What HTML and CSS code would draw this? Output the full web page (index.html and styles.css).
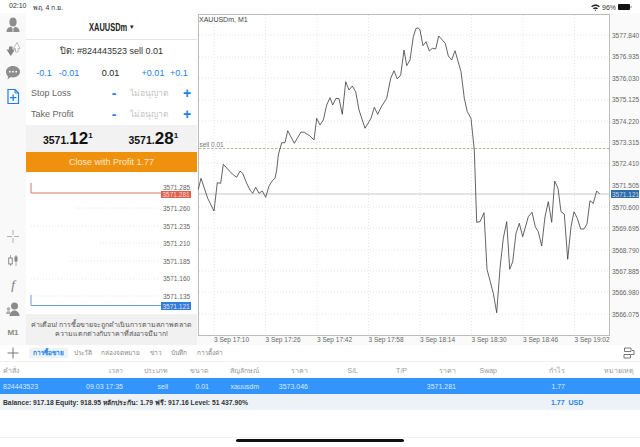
FILE: index.html
```html
<!DOCTYPE html>
<html lang="th">
<head>
<meta charset="utf-8">
<title>XAUUSDm</title>
<link rel="stylesheet" href="styles.css">
</head>
<body>
<div class="app">
  <header class="status">
    <div class="status-left"><span>02:10</span><span>พฤ. 4 ก.ย.</span></div>
    <div class="status-right">
      <svg class="wifi" width="9" height="7" viewBox="0 0 10 8"><path d="M0 2.6C2.8 0 7.2 0 10 2.6L8.9 3.8C6.6 1.8 3.4 1.8 1.100 3.800ZM2.100 4.800C3.800 3.300 6.200 3.300 7.900 4.800L6.800 6C5.700 5.100 4.300 5.100 3.200 6ZM5 8L4 6.900C4.600 6.400 5.400 6.400 6 6.900Z" fill="#222"/></svg>
      <span>96%</span>
      <svg class="battery" width="14" height="6" viewBox="0 0 14 6"><rect width="12" height="6" rx="1" fill="#111"/><rect x="12.500" y="2" width="1" height="2" fill="#888"/></svg>
    </div>
  </header>

  <main class="main">
    <nav class="rail">
      <div class="rail-group">
        <svg class="rail-icon" width="16" height="17" viewBox="0 0 16 17"><ellipse cx="8" cy="6" rx="3.600" ry="4.500" fill="#8e8e8e"/><path d="M1.500 16c0-3.500 2.500-5 4.500-5.200L8 13l2-2.200c2 .2 4.500 1.700 4.500 5.200z" fill="#8e8e8e"/><path d="M8 13v3" stroke="#fff" stroke-width=".7"/></svg>
        <svg class="rail-icon" width="16" height="17" viewBox="0 0 16 17"><path d="M1.500 9.500h2.500V6.500h3.500v3H10L5.700 16z" fill="#858585"/><path d="M8.500 8.500h2v3.500h2.500V8.500h2L12 2.500z" fill="#fff" stroke="#aaa" stroke-width=".8"/></svg>
        <svg class="rail-icon" width="16" height="17" viewBox="0 0 16 17"><path d="M8 2c3.900 0 7 2.500 7 5.700s-3.100 5.700-7 5.700c-.8 0-1.600-.1-2.300-.3L2.500 15.500l.7-3C1.800 11.400 1 9.700 1 7.700 1 4.500 4.100 2 8 2z" fill="#8e8e8e"/><circle cx="4.800" cy="7.700" r=".9" fill="#fff"/><circle cx="8" cy="7.700" r=".9" fill="#fff"/><circle cx="11.200" cy="7.700" r=".9" fill="#fff"/></svg>
        <svg class="rail-icon" width="16" height="17" viewBox="0 0 16 17"><path d="M3 1.500h7l3.500 3.500v10.500H3z" fill="#fff" stroke="#1a7ee6" stroke-width="1.200"/><path d="M10 1.500V5h3.500" fill="none" stroke="#1a7ee6" stroke-width="1"/><path d="M8.200 6.500v6.500M5 9.700h6.500" stroke="#1a7ee6" stroke-width="1.300"/></svg>
      </div>
      <div class="rail-group rail-tools">
        <svg class="rail-icon" width="16" height="15" viewBox="0 0 16 15"><path d="M8 1v5M8 9v5M2 7.500h5M9 7.500h5" stroke="#b0b0b0" stroke-width="1"/></svg>
        <svg class="rail-icon" width="16" height="15" viewBox="0 0 16 15"><path d="M5.500 2v11M11 2v11" stroke="#999" stroke-width=".8"/><rect x="3.800" y="5" width="3.400" height="6" fill="#fff" stroke="#777" stroke-width=".9"/><rect x="9.500" y="3.500" width="3" height="5" fill="#888"/></svg>
        <span class="rail-f">f</span>
        <svg class="rail-icon" width="16" height="15" viewBox="0 0 16 15"><circle cx="9.500" cy="5" r="3.500" fill="#8a8a8a"/><path d="M4.500 15c0-3 2.200-5.500 5-5.500s5 2.500 5 5.500z" fill="#8a8a8a"/><circle cx="3.500" cy="8" r="1.800" fill="#aaa"/><path d="M1 13c0-1.600 1-3 2.500-3s2 1.400 2 3z" fill="#aaa"/></svg>
        <span class="rail-m1">M1</span>
      </div>
    </nav>

    <section class="panel">
      <h1 class="symbol"><span class="symbol-name">XAUUSDm</span><span class="caret">▾</span></h1>
      <p class="close-title">ปิด: #824443523 sell 0.01</p>
      <div class="volume">
        <span class="link">-0.1</span><span class="link">-0.01</span>
        <span class="vol-value">0.01</span>
        <span class="link">+0.01</span><span class="link">+0.1</span>
      </div>
      <div class="level"><span>Stop Loss</span><b class="step">-</b><span class="na">ไม่อนุญาต</span><b class="step">+</b></div>
      <div class="level"><span>Take Profit</span><b class="step">-</b><span class="na">ไม่อนุญาต</span><b class="step">+</b></div>
      <div class="quotes">
        <div class="quote">3571.<span class="big">12</span><sup>1</sup></div>
        <div class="quote">3571.<span class="big">28</span><sup>1</sup></div>
      </div>
      <button class="close-btn">Close with Profit 1.77</button>
      <svg class="mini" width="171" height="142" viewBox="26 172 171 142">
        <path class="mini-grid" d="M76 208H158M31 226H158M100 243H158M70 261H158M31 279H158M31 296H158"/>
        <g class="mini-labels">
          <text x="163" y="190">3571.285</text>
          <text x="163" y="211">3571.260</text>
          <text x="163" y="229">3571.235</text>
          <text x="163" y="246">3571.210</text>
          <text x="163" y="264">3571.185</text>
          <text x="163" y="281">3571.160</text>
          <text x="163" y="299">3571.135</text>
        </g>
        <path d="M31 183V193H161" fill="none" stroke="#d9776b" stroke-width="1"/>
        <path d="M31 295V305.500H161" fill="none" stroke="#6f9fd8" stroke-width="1"/>
        <rect x="161" y="191" width="30" height="7" fill="#de5f50"/>
        <text class="tag-text" x="162.500" y="197">3571.281</text>
        <rect x="161" y="302" width="30" height="8" fill="#2d7fe0"/>
        <text class="tag-text" x="162.500" y="308.500">3571.121</text>
      </svg>
      <p class="warn">ค่าเตือน! การซื้อขายจะถูกดำเนินการตามสภาพตลาด<br>ความแตกต่างกับราคาที่ส่งอาจมีมาก!</p>
    </section>

    <section class="chart">
      <svg width="443" height="332" viewBox="197 13 443 332">
        <rect x="198.500" y="14.500" width="411" height="321" fill="#fff" stroke="#bdbdbd" stroke-width="1"/>
        <path class="chart-grid" d="M199 35H609M199 57H609M199 78H609M199 100H609M199 121H609M199 142H609M199 163H609M199 207H609M199 228H609M199 250H609M199 271H609M199 292H609M199 314H609M214 15V335M265.500 15V335M317 15V335M368.500 15V335M420 15V335M471.500 15V335M523 15V335M574.500 15V335"/>
        <path d="M199 194H609" stroke="#c8c8c8" stroke-width="1"/>
        <path d="M199 148.500H609" stroke="#b4b4a4" stroke-width="1" stroke-dasharray="2.500 1.500"/>
        <polyline class="price" points="198.300,189.300 201,178.300 207.700,198.300 214,211 217.300,182.700 220.700,183.300 223.300,164.300 232.300,174 236.700,177.300 240,171 242.700,173.300 246.700,183.300 250,190 252.700,193.300 255.700,187.300 259,193.300 262.300,191 265.700,197.300 269,186 272.300,180.700 275,178.300 276.700,170 278.300,155 281.700,142.700 285,142.700 287.700,130.700 294.300,143.300 301,132 304.300,132.300 310,136 314,140 316.700,118.300 320,125 323.300,120 326.700,105 330,97.700 332.700,105 336,98.300 339,98.700 342.300,114.300 345.700,81.700 349,90 352.300,86 355.700,91.700 359,110 365,128.300 371,118.300 374.300,107.300 377.700,114.300 381,107.300 386.700,98.300 390.700,78.300 394,70.700 397.300,79 400.700,75 404,50 406.700,65.700 410,60 413.300,36.700 416,28.300 418.300,28 420,30 423,45.700 426,41.700 429.300,51 432.300,48.300 435.700,49 438.700,36 445.300,43.300 448.300,56 451.700,60 455,50.700 461,71.700 464.300,98.300 467.300,111.700 471,118.300 474.300,150 476.700,222.300 480,221.700 484,212.700 487,269.300 490.300,281.700 493.300,293.300 496.700,312.700 500,268.300 503.300,238.300 506.700,221.700 509.700,269.300 512.700,261.700 516,233.300 519.300,223.300 522.700,236.700 528.300,216.700 532,212.300 535.300,226.700 538.300,231.700 541.700,246 545,216.700 548.300,201.700 551.700,222.300 554.700,181 558,188.300 561,211.700 564.300,214 567.700,259.300 571,226.700 574,211.700 577.300,218.300 580.700,229 584,229 587,224 590,200.700 593.300,203.300 596.700,191 599.700,194"/>
        <text class="chart-title" x="199" y="21.500">XAUUSDm, M1</text>
        <text class="chart-note" x="199.500" y="147">sell 0.01</text>
        <g class="axis">
          <text x="612" y="38">3577.840</text>
          <text x="612" y="59">3576.935</text>
          <text x="612" y="81">3576.030</text>
          <text x="612" y="102">3575.125</text>
          <text x="612" y="124">3574.220</text>
          <text x="612" y="145">3573.315</text>
          <text x="612" y="166">3572.410</text>
          <text x="612" y="188">3571.505</text>
          <text x="612" y="210">3570.600</text>
          <text x="612" y="231">3569.695</text>
          <text x="612" y="253">3568.790</text>
          <text x="612" y="274">3567.885</text>
          <text x="612" y="295">3566.980</text>
          <text x="612" y="317">3566.075</text>
          <text x="214" y="341.500">3 Sep 17:10</text>
          <text x="265.500" y="341.500">3 Sep 17:26</text>
          <text x="317" y="341.500">3 Sep 17:42</text>
          <text x="368.500" y="341.500">3 Sep 17:58</text>
          <text x="420" y="341.500">3 Sep 18:14</text>
          <text x="471.500" y="341.500">3 Sep 18:30</text>
          <text x="523" y="341.500">3 Sep 18:46</text>
          <text x="574.500" y="341.500">3 Sep 19:02</text>
        </g>
        <rect x="611" y="190" width="28" height="8" fill="#2f6ea8"/>
        <text class="axis-tag" x="612" y="196.500">3571.121</text>
      </svg>
    </section>
  </main>

  <section class="tabs">
    <svg class="tab-plus" width="14" height="14" viewBox="0 0 14 14"><path d="M7 1.500v11M1.500 7h11" stroke="#777" stroke-width="1"/></svg>
    <div class="tab-list">
      <span class="tab active">การซื้อขาย</span>
      <span class="tab">ประวัติ</span>
      <span class="tab">กล่องจดหมาย</span>
      <span class="tab">ข่าว</span>
      <span class="tab">บันทึก</span>
      <span class="tab">การตั้งค่า</span>
    </div>
    <svg class="tab-layout" width="12" height="12" viewBox="0 0 12 12"><path d="M1.500 1h6.500v3.500H1.500zM1 7.500h6.500V11H1zM8 7.500h3V3.500H9" fill="none" stroke="#777" stroke-width="1"/></svg>
  </section>

  <div class="table">
    <div class="row head">
      <span class="c-order">คำสั่ง</span><span>เวลา</span><span>ประเภท</span><span>ขนาด</span><span>สัญลักษณ์</span><span>ราคา</span><span>S/L</span><span>T/P</span><span>ราคา</span><span>Swap</span><span>กำไร</span><span class="c-note">หมายเหตุ</span>
    </div>
    <div class="row selected">
      <span class="c-order">824443523</span><span>09.03 17:35</span><span>sell</span><span>0.01</span><span>xauusdm</span><span>3573.046</span><span></span><span></span><span>3571.281</span><span></span><span>1.77</span><span></span>
    </div>
    <div class="balance">
      <span class="balance-text">Balance: 917.18 Equity: 918.95 หลักประกัน: 1.79 ฟรี: 917.16 Level: 51 437.90%</span>
      <span class="balance-profit">1.77&nbsp; USD</span>
    </div>
  </div>

  <footer class="home"><span class="home-bar"></span></footer>
</div>
</body>
</html>
```

FILE: styles.css
```css
* { box-sizing: border-box; }
html, body { margin: 0; padding: 0; }
body {
  width: 640px;
  height: 447px;
  overflow: hidden;
  background: #fff;
  font-family: "Liberation Sans", "Noto Sans", "Noto Sans CJK SC", sans-serif;
  color: #333;
}
.app { display: flex; flex-direction: column; width: 640px; height: 447px; }

.status {
  height: 13px;
  display: flex;
  justify-content: space-between;
  align-items: center;
  padding: 1px 8px 0 9px;
  font-size: 7px;
  color: #333;
}
.status-left { display: flex; gap: 6px; }
.status-right { display: flex; align-items: center; gap: 2px; }
.battery { display: block; margin-left: 0; }

.main { display: flex; height: 332px; background: #f5f5f5; }

.rail {
  width: 26px;
  display: flex;
  flex-direction: column;
  justify-content: space-between;
  align-items: center;
  padding: 3px 0 5px;
  background: #f9f9f9;
}
.rail-group { display: flex; flex-direction: column; align-items: center; gap: 7px; }
.rail-tools { gap: 9px; }
.rail-icon { display: block; }
.rail-f { font: italic 13px/15px "Liberation Serif", serif; color: #777; }
.rail-m1 { font-size: 8px; font-weight: 700; line-height: 15px; color: #888; }

.panel {
  width: 171px;
  display: flex;
  flex-direction: column;
  background: #fff;
}
.symbol {
  margin: 0;
  height: 27px;
  padding-top: 1px;
  display: flex;
  justify-content: center;
  align-items: center;
  gap: 3px;
  font-size: 7.500px;
  font-weight: 700;
  color: #222;
  border-bottom: 1px solid #e4e4e4;
}
.symbol-name {
  display: inline-block;
  font-size: 11px;
  line-height: 12px;
  width: 38px;
  white-space: nowrap;
  transform: scaleX(.68);
  transform-origin: left center;
}
.caret { font-size: 7px; font-weight: 400; }
.close-title {
  margin: 0;
  height: 23px;
  line-height: 23px;
  text-align: center;
  font-size: 9px;
  color: #333;
}
.volume {
  display: grid;
  grid-template-columns: 23px 27px 1fr 29px 23px;
  height: 19px;
  align-items: center;
  padding: 0 6.500px;
  font-size: 9px;
  text-align: center;
}
.link { color: #1f84e8; }
.vol-value { color: #222; }
.level {
  display: grid;
  grid-template-columns: 75px 16px 55px 20px;
  align-items: center;
  height: 21px;
  padding-left: 5px;
  font-size: 9px;
  color: #666;
}
.step { text-align: center; color: #1f84e8; font-size: 14px; font-weight: 700; line-height: 14px; }
.na { text-align: center; color: #c4c4c4; font-size: 8.500px; }
.quotes {
  height: 27px;
  display: grid;
  grid-template-columns: 1fr 1fr;
  align-items: center;
  background: #f2f2f2;
  text-align: center;
  margin-top: 1px;
}
.quote { font-size: 10.500px; font-weight: 700; color: #111; line-height: 27px; margin-left: -2px; }
.big { font-size: 17px; }
.quote sup { font-size: 8px; line-height: 0; vertical-align: 6px; }
.close-btn {
  display: block;
  width: 171px;
  height: 20px;
  padding: 0;
  border: 0;
  background: #ef910d;
  color: #fbe9d0;
  font: 9px "Liberation Sans", sans-serif;
}
.mini { display: block; flex: none; }
.mini-grid { stroke: #e8e8e8; stroke-width: 1; stroke-dasharray: 1 2; fill: none; }
.mini-labels text { font-size: 6.500px; fill: #666; }
.tag-text { font-size: 6.500px; fill: #f6d9d4; }
.warn {
  margin: 0;
  flex: 1;
  padding: 6px 0 0;
  background: #f1f1f1;
  text-align: center;
  font-size: 7px;
  line-height: 9px;
  color: #555;
}

.chart { flex: 1; background: #fafafa; }
.chart svg { display: block; }
.chart-grid { stroke: #e6e6e6; stroke-width: 1; stroke-dasharray: 1 2; fill: none; }
.price { fill: none; stroke: #3c3c3c; stroke-width: .8; stroke-linejoin: round; }
.chart-title { font-size: 7px; fill: #444; }
.chart-note { font-size: 6.500px; fill: #777; }
.axis text { font-size: 6.500px; fill: #666; }
.axis-tag { font-size: 6.500px; fill: #c9d8e8; }

.tabs {
  height: 17px;
  display: flex;
  align-items: center;
  padding: 0 5px 0 6px;
  background: #fff;
  border-bottom: 1px solid #efefef;
}
.tab-plus { flex: none; }
.tab-list { display: flex; flex: 1; gap: 9.500px; margin-left: 9px; font-size: 6.500px; color: #888; }
.tab { white-space: nowrap; }
.tab.active { color: #1a7ee6; font-weight: 700; background: #eef4fb; padding: 0 4px; margin-right: -4px; }

.table { font-size: 7px; }
.row {
  display: grid;
  grid-template-columns: 60px 63px 45px 41px 50px 49px 50px 49px 49px 41px 68px 72px;
  align-items: center;
  text-align: right;
}
.row span { white-space: nowrap; }
.head { height: 16px; color: #999; background: #fff; }
.selected { height: 16px; background: #3395fb; color: #d7e9ff; }
.row .c-order { text-align: left; padding-left: 3px; }
.c-note { padding-right: 3px; }
.balance {
  height: 16px;
  display: flex;
  align-items: center;
  background: #edf2f9;
  padding-left: 3px;
  font-weight: 700;
  color: #333;
  font-size: 6.750px;
}
.balance-text { width: 548px; white-space: nowrap; }
.balance-profit { color: #1f84e8; font-size: 7px; }

.home {
  height: 10px;
  margin-top: 27px;
  border-top: 1px solid #f0f0f0;
  display: flex;
  justify-content: center;
}
.home-bar { display: block; width: 168px; height: 3px; margin-top: 1px; background: #111; border-radius: 1.500px; }
```
